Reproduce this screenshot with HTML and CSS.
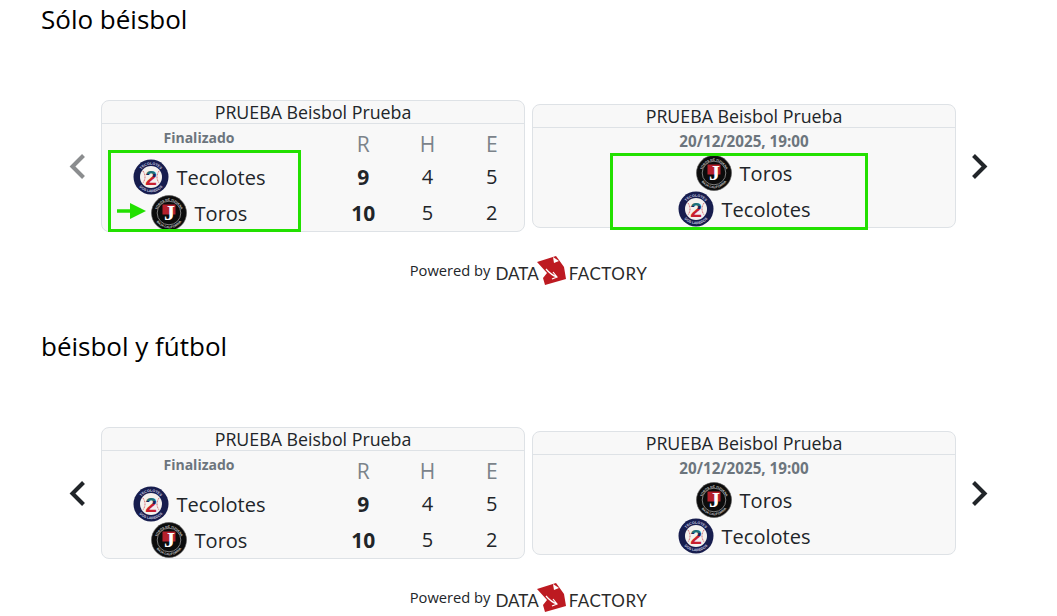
FILE: index.html
```html
<!DOCTYPE html>
<html lang="en">
<head>
  <meta charset="UTF-8" />
  <title>Marcadores</title>
  <link rel="stylesheet" href="styles.css">
</head>
<body>
  <svg class="defs" width="0" height="0">
    <defs>
      <linearGradient id="two-fill" x1="0" y1="0" x2="0" y2="1">
        <stop offset="0.38" stop-color="#1f6f78" />
        <stop offset="0.38" stop-color="#1c2358" />
        <stop offset="0.52" stop-color="#1c2358" />
        <stop offset="0.52" stop-color="#c8202f" />
      </linearGradient>
      <path id="ring-top" d="M5.800 18a12.200 12.200 0 0 1 24.400 0" />
      <path id="ring-bottom" d="M2.800 18a15.200 15.200 0 0 0 30.400 0" />
      <symbol id="logo-tecolotes" viewBox="0 0 36 36">
        <circle cx="18" cy="18" r="17.5" fill="#171d4e" />
        <circle cx="18" cy="18" r="11" fill="#f4f1ee" />
        <path d="M10 12q4 6 0 12M26 12q-4 6 0 12" fill="none" stroke="#c9363f" stroke-width="0.8" stroke-dasharray="1 0.6" />
        <text class="logo-ring-text"><textPath href="#ring-top" startOffset="50%">TECOLOTES</textPath></text>
        <text class="logo-ring-text"><textPath href="#ring-bottom" startOffset="50%">DOS LAREDOS</textPath></text>
        <text class="logo-two" x="18" y="25.500">2</text>
      </symbol>
      <symbol id="logo-toros" viewBox="0 0 36 36">
        <circle cx="18" cy="18" r="17.500" fill="#0c0c0c" stroke="#555" stroke-width="0.6" />
        <circle cx="18" cy="18" r="11.800" fill="none" stroke="#aaa" stroke-width="0.7" />
        <text class="logo-ring-text toros-ring"><textPath href="#ring-top" startOffset="50%">TOROS DE TIJUANA</textPath></text>
        <text class="logo-ring-text toros-ring"><textPath href="#ring-bottom" startOffset="50%">BAJA CALIFORNIA</textPath></text>
        <rect x="11.500" y="9.500" width="13" height="10" fill="#b5202c" />
        <text class="logo-j" x="18.500" y="25">J</text>
      </symbol>
      <symbol id="brand-mark" viewBox="0 0 30 30">
        <path d="M0 6 19 0l3 4 5 7 2 12-21 6-2-7 4-5z" fill="#bd1a21" />
        <path d="M16 1l1 6 5-2z" fill="#fff" />
        <path d="M9 13q5 6 11 8m-4-5 4 5-5 2" fill="none" stroke="#fff" stroke-width="1.200" />
      </symbol>
    </defs>
  </svg>

  <section class="block">
    <h2>Sólo béisbol</h2>
    <div class="carousel">
      <button class="nav-btn muted"><svg viewBox="0 0 16 24"><path d="M12 4l-8 8 8 8" /></svg></button>
      <div class="cards">
        <div class="card">
          <div class="card-title">PRUEBA Beisbol Prueba</div>
          <div class="score-grid">
            <div class="status">Finalizado</div>
            <div class="col-head">R</div><div class="col-head">H</div><div class="col-head">E</div>
            <div class="team"><svg class="logo"><use href="#logo-tecolotes" /></svg>Tecolotes</div>
            <div class="num bold">9</div><div class="num">4</div><div class="num">5</div>
            <div class="team"><svg class="logo"><use href="#logo-toros" /></svg>Toros</div>
            <div class="num bold">10</div><div class="num">5</div><div class="num">2</div>
          </div>
          <div class="mark mark-score"></div>
          <svg class="mark-arrow" viewBox="0 0 29 16"><path d="M0 6.200h13V0l16 8-16 8V9.800H0z" /></svg>
        </div>
        <div class="card">
          <div class="card-title">PRUEBA Beisbol Prueba</div>
          <div class="status date">20/12/2025, 19:00</div>
          <div class="team"><svg class="logo"><use href="#logo-toros" /></svg>Toros</div>
          <div class="team"><svg class="logo"><use href="#logo-tecolotes" /></svg>Tecolotes</div>
          <div class="mark mark-next"></div>
        </div>
      </div>
      <button class="nav-btn"><svg viewBox="0 0 16 24"><path d="M4 4l8 8-8 8" /></svg></button>
    </div>
    <div class="powered">
      <span class="powered-by">Powered by</span>
      <span class="brand"><span class="brand-data">DATA</span><svg class="brand-mark"><use href="#brand-mark" /></svg><span class="brand-factory">FACTORY</span></span>
    </div>
  </section>

  <section class="block">
    <h2>béisbol y fútbol</h2>
    <div class="carousel">
      <button class="nav-btn"><svg viewBox="0 0 16 24"><path d="M12 4l-8 8 8 8" /></svg></button>
      <div class="cards">
        <div class="card">
          <div class="card-title">PRUEBA Beisbol Prueba</div>
          <div class="score-grid">
            <div class="status">Finalizado</div>
            <div class="col-head">R</div><div class="col-head">H</div><div class="col-head">E</div>
            <div class="team"><svg class="logo"><use href="#logo-tecolotes" /></svg>Tecolotes</div>
            <div class="num bold">9</div><div class="num">4</div><div class="num">5</div>
            <div class="team"><svg class="logo"><use href="#logo-toros" /></svg>Toros</div>
            <div class="num bold">10</div><div class="num">5</div><div class="num">2</div>
          </div>
        </div>
        <div class="card">
          <div class="card-title">PRUEBA Beisbol Prueba</div>
          <div class="status date">20/12/2025, 19:00</div>
          <div class="team"><svg class="logo"><use href="#logo-toros" /></svg>Toros</div>
          <div class="team"><svg class="logo"><use href="#logo-tecolotes" /></svg>Tecolotes</div>
        </div>
      </div>
      <button class="nav-btn"><svg viewBox="0 0 16 24"><path d="M4 4l8 8-8 8" /></svg></button>
    </div>
    <div class="powered">
      <span class="powered-by">Powered by</span>
      <span class="brand"><span class="brand-data">DATA</span><svg class="brand-mark"><use href="#brand-mark" /></svg><span class="brand-factory">FACTORY</span></span>
    </div>
  </section>
</body>
</html>
```

FILE: styles.css
```css
body {
  margin: 0;
  padding-left: 41px;
  width: 975px;
  background-color: #fff;
  font-family: "Open Sans", "Noto Sans", sans-serif;
  color: #212529;
}

.defs {
  display: block;
  height: 0;
}

.block + .block {
  margin-top: 41px;
}

h2 {
  margin: 0;
  height: 100px;
  font-size: 26px;
  font-weight: 400;
  line-height: 39px;
  color: #000;
}

.carousel {
  display: flex;
  align-items: center;
  height: 132px;
}

.nav-btn {
  flex: none;
  width: 46px;
  height: 40px;
  padding: 0;
  border: none;
  background: none;
  display: flex;
  align-items: center;
  justify-content: center;
}

.nav-btn:first-child {
  margin-left: 14px;
}

.nav-btn svg {
  width: 22px;
  height: 33px;
  fill: none;
  stroke: #212529;
  stroke-width: 3;
}

.nav-btn.muted svg {
  stroke: #8b8d8f;
}

.cards {
  display: flex;
  align-items: center;
  gap: 7px;
}

.card {
  position: relative;
  width: 422px;
  border: 1px solid #dee2e6;
  border-radius: 8px;
  background-color: #f8f8f8;
  text-align: center;
}

.card-title {
  height: 22px;
  line-height: 23px;
  font-size: 17.8px;
  border-bottom: 1px solid #dee2e6;
}

.score-grid {
  display: grid;
  grid-template-columns: 229px repeat(3, 1fr);
  grid-template-rows: 35px 36px 36px;
}

.status {
  font-size: 14px;
  font-weight: 700;
  color: #6c757d;
  line-height: 27px;
  height: 27px;
}

.score-grid .status {
  padding-right: 35px;
}

.date {
  font-size: 15.2px;
}

.col-head {
  font-size: 21px;
  line-height: 41px;
  color: #7b838a;
}

.team {
  display: flex;
  align-items: center;
  justify-content: center;
  gap: 8px;
  height: 36px;
  font-size: 20px;
}

.score-grid .team {
  padding-right: 35px;
}

.num {
  font-size: 20px;
  line-height: 36px;
}

.bold {
  font-size: 21px;
  font-weight: 700;
}

.logo {
  width: 36px;
  height: 36px;
}

.logo-ring-text {
  font-family: "Liberation Sans", sans-serif;
  font-size: 3.6px;
  font-weight: 700;
  fill: #c9cbe0;
  text-anchor: middle;
}

.toros-ring {
  font-size: 3.2px;
  fill: #ccc;
}

.logo-two {
  font-family: "Liberation Sans", sans-serif;
  font-size: 21px;
  font-weight: 700;
  fill: url(#two-fill);
  text-anchor: middle;
}

.logo-j {
  font-family: "Liberation Serif", serif;
  font-size: 22px;
  font-weight: 700;
  fill: #fff;
  text-anchor: middle;
}

/* green annotations on top of the first row of cards */
.mark {
  position: absolute;
  border: 3px solid #22e000;
}

.mark-score {
  left: 6px;
  top: 49px;
  width: 187px;
  height: 76px;
}

.mark-next {
  left: 77px;
  top: 48px;
  width: 252px;
  height: 71px;
}

.mark-arrow {
  position: absolute;
  left: 15px;
  top: 102px;
  width: 29px;
  height: 16px;
  fill: #22e000;
}

.powered {
  display: flex;
  justify-content: center;
  align-items: center;
  gap: 5px;
  height: 30px;
  margin-top: 24px;
}

.powered-by {
  margin-bottom: 2px;
  font-size: 14.7px;
}

.brand {
  display: flex;
  align-items: center;
  font-family: "Lato", sans-serif;
  font-size: 17px;
  color: #2a2a2a;
}

.brand-data,
.brand-factory {
  margin-top: 5px;
}

.brand-factory {
  letter-spacing: 0.5px;
}

.brand-mark {
  width: 30px;
  height: 30px;
  margin: 0 2px 0 -2px;
}
```
